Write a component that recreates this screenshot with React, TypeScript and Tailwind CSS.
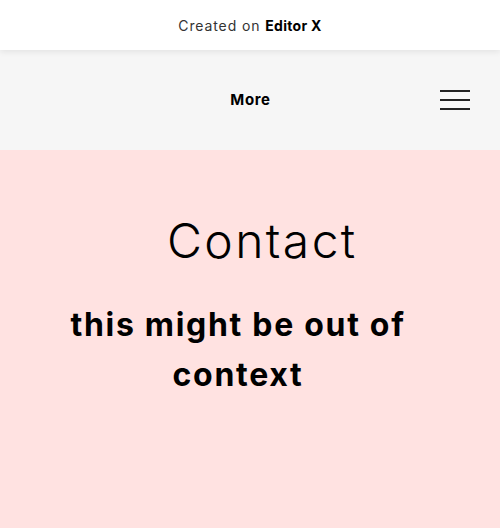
export default function App() {
  return (
    <div className="w-[500px] h-[528px] overflow-hidden bg-[#ffe2e1] font-['Inter',sans-serif]">
      <div className="relative z-10 h-[50px] bg-white flex items-center justify-center shadow-[0_2px_6px_rgba(0,0,0,0.08)]">
        <span className="text-[14px] tracking-[0.9px] text-[#333] pt-[1px]">
          Created on <span className="font-bold text-black tracking-[0.3px]">Editor X</span>
        </span>
      </div>

      <header className="h-[100px] bg-[#f6f6f6] flex items-center relative">
        <span className="mx-auto text-[15px] font-bold text-black tracking-[0.6px] pl-[1px]">More</span>
        <button className="absolute right-[30px] top-[40px] w-[30px] flex flex-col gap-[7px]">
          <span className="block h-[2px] bg-[#222]" />
          <span className="block h-[2px] bg-[#222]" />
          <span className="block h-[2px] bg-[#222]" />
        </button>
      </header>

      <main className="flex flex-col">
        <h1 className="pt-[62px] pl-[167px] text-[48px] leading-[58px] font-light text-black tracking-[2.4px]">Contact</h1>
        <p className="mt-[30px] w-[380px] ml-[48px] text-center text-[32px] leading-[50px] font-bold text-black tracking-[1.7px]">
          this might be out of context
        </p>
      </main>
    </div>
  )
}
